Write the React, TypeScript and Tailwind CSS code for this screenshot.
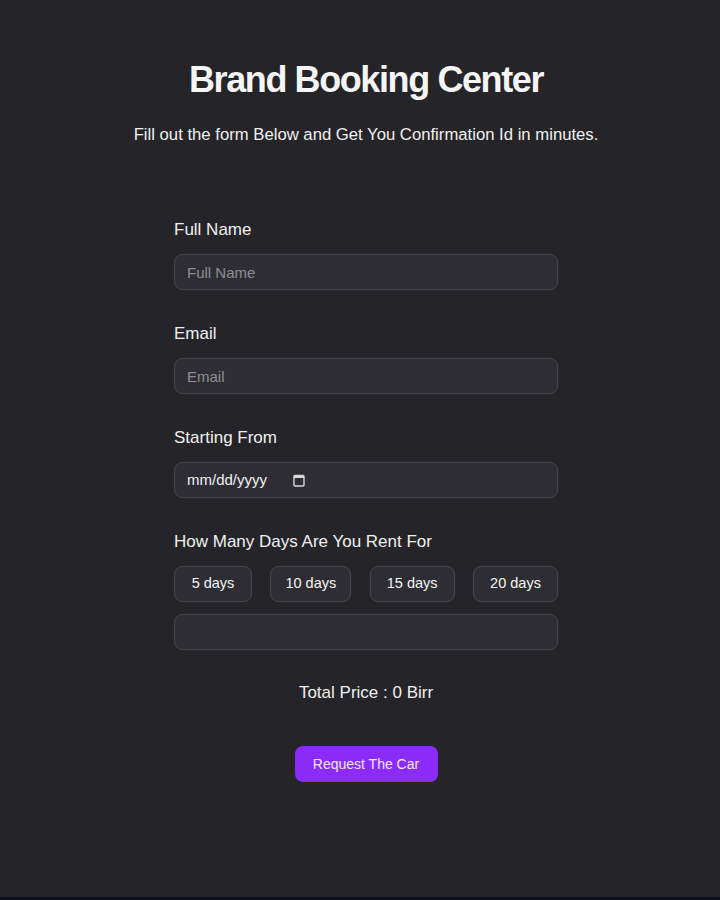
import React, { useState } from "react";

export default function App() {
  const [days, setDays] = useState<number | null>(null);
  const font = { fontFamily: '"Liberation Sans", Arial, sans-serif' };
  return (
    <div style={font} className="min-h-[900px] bg-[#252429] text-white border-b-[3px] border-[#0f0f1a] pl-[12px]">
      <div className="flex flex-col items-center pt-[57px]">
        <h1 className="text-[36px] font-bold leading-[46px] tracking-[-1.4px] text-[#f5f5f5]">Brand Booking Center</h1>
        <p className="mt-[22px] text-[16.7px] leading-[20px] text-[#f0f0f0]">
          Fill out the form Below and Get You Confirmation Id in minutes.
        </p>
        <div className="w-[384px] mt-[75px] flex flex-col">
          <label className="text-[17px] leading-[20px] text-[#f0f0f0]">Full Name</label>
          <input
            placeholder="Full Name"
            className="mt-[14px] h-[36px] rounded-[8px] border border-[#47464c] bg-[#2e2d33] px-[12px] text-[15px] text-white placeholder:text-[#8e8d93] outline-none"
          />
          <label className="mt-[34px] text-[17px] leading-[20px] text-[#f0f0f0]">Email</label>
          <input
            placeholder="Email"
            className="mt-[14px] h-[36px] rounded-[8px] border border-[#47464c] bg-[#2e2d33] px-[12px] text-[15px] text-white placeholder:text-[#8e8d93] outline-none"
          />
          <label className="mt-[34px] text-[17px] leading-[20px] text-[#f0f0f0]">Starting From</label>
          <div className="mt-[14px] h-[36px] rounded-[8px] border border-[#47464c] bg-[#2e2d33] px-[12px] flex items-center">
            <span className="text-[15px] text-[#f0f0f0]">mm/dd/yyyy</span>
            <svg className="ml-[26px]" width="12" height="13" viewBox="0 0 12 13" fill="none">
              <rect x="1" y="1.5" width="10" height="10.5" rx="1" stroke="#d8d8d8" strokeWidth="1.4" />
              <rect x="1" y="1.5" width="10" height="2.5" fill="#d8d8d8" />
            </svg>
          </div>
          <label className="mt-[34px] text-[17px] leading-[20px] text-[#f0f0f0]">How Many Days Are You Rent For</label>
          <div className="mt-[14px] flex justify-between">
            {[5, 10, 15, 20].map((d) => (
              <button
                key={d}
                onClick={() => setDays(d)}
                className={`h-[36px] rounded-[8px] border border-[#47464c] bg-[#2e2d33] text-[14.5px] text-[#f5f5f5] ${
                  d === 5 ? "w-[78px]" : d === 10 ? "w-[81px]" : "w-[85px]"
                }`}
              >
                {d} days
              </button>
            ))}
          </div>
          <div className="mt-[12px] h-[36px] rounded-[8px] border border-[#47464c] bg-[#2e2d33]" />
          <p className="mt-[33px] text-center text-[17px] leading-[20px] text-[#f0f0f0]">
            Total Price : {days ? days * 0 : 0} Birr
          </p>
          <div className="mt-[43px] flex justify-center">
            <button className="h-[36px] w-[143px] rounded-[8px] bg-[#8a2bf7] text-[14px] text-[#f3e8ff]">
              Request The Car
            </button>
          </div>
        </div>
      </div>
    </div>
  );
}
